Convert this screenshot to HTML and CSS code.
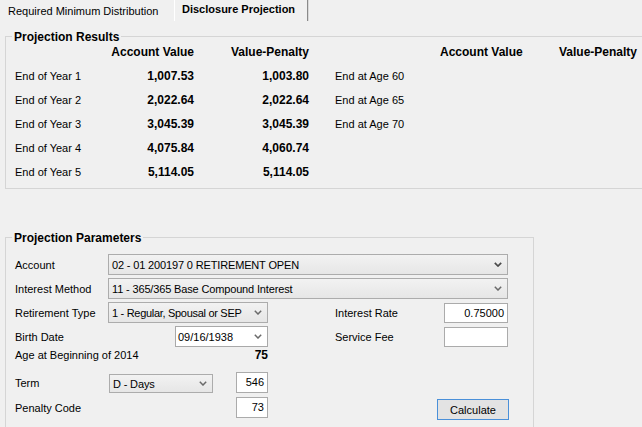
FILE: index.html
```html
<!DOCTYPE html>
<html>
<head>
<meta charset="utf-8">
<link rel="stylesheet" href="styles.css">
</head>
<body>
<div class="tabs">
  <div class="tab">Required Minimum Distribution</div>
  <div class="tab active">Disclosure Projection</div>
</div>
<div class="page">
  <section class="group results">
    <h2 class="group-title">Projection Results</h2>
    <div class="results-grid">
      <span></span><b class="num">Account Value</b><b class="num">Value-Penalty</b><span></span><b class="num">Account Value</b><b class="num">Value-Penalty</b>
      <span>End of Year 1</span><b class="num">1,007.53</b><b class="num">1,003.80</b><span class="age">End at Age 60</span><b class="num"></b><b class="num"></b>
      <span>End of Year 2</span><b class="num">2,022.64</b><b class="num">2,022.64</b><span class="age">End at Age 65</span><b class="num"></b><b class="num"></b>
      <span>End of Year 3</span><b class="num">3,045.39</b><b class="num">3,045.39</b><span class="age">End at Age 70</span><b class="num"></b><b class="num"></b>
      <span>End of Year 4</span><b class="num">4,075.84</b><b class="num">4,060.74</b><span></span><b class="num"></b><b class="num"></b>
      <span>End of Year 5</span><b class="num">5,114.05</b><b class="num">5,114.05</b><span></span><b class="num"></b><b class="num"></b>
    </div>
  </section>

  <section class="group params">
    <h2 class="group-title">Projection Parameters</h2>
    <div class="form">
      <div class="row">
        <span class="lbl w93">Account</span>
        <div class="select w400"><span>02 - 01 200197 0 RETIREMENT OPEN</span><svg class="chev dark" width="8" height="5" viewBox="0 0 8 5"><polyline points="0.8,0.8 4,4 7.2,0.8" fill="none" stroke="currentColor" stroke-width="1.7"/></svg></div>
      </div>
      <div class="row">
        <span class="lbl w93">Interest Method</span>
        <div class="select w400"><span>11 - 365/365 Base Compound Interest</span><svg class="chev" width="8" height="5" viewBox="0 0 8 5"><polyline points="0.8,0.8 4,4 7.2,0.8" fill="none" stroke="currentColor" stroke-width="1.5"/></svg></div>
      </div>
      <div class="row">
        <span class="lbl w93">Retirement Type</span>
        <div class="select narrow w160"><span>1 - Regular, Spousal or SEP</span><svg class="chev" width="8" height="5" viewBox="0 0 8 5"><polyline points="0.8,0.8 4,4 7.2,0.8" fill="none" stroke="currentColor" stroke-width="1.5"/></svg></div>
        <span class="lbl w109 ml67">Interest Rate</span>
        <div class="input w64">0.75000</div>
      </div>
      <div class="row">
        <span class="lbl w160">Birth Date</span>
        <div class="select date w93"><span>09/16/1938</span><svg class="chev" width="8" height="5" viewBox="0 0 8 5"><polyline points="0.8,0.8 4,4 7.2,0.8" fill="none" stroke="currentColor" stroke-width="1.5"/></svg></div>
        <span class="lbl w109 ml67">Service Fee</span>
        <div class="input w64"></div>
      </div>
      <div class="row age-row">
        <span class="lbl">Age at Beginning of 2014</span>
        <b class="age-val">75</b>
      </div>
      <div class="row tall">
        <span class="lbl w94">Term</span>
        <div class="select term w104"><span>D - Days</span><svg class="chev" width="8" height="5" viewBox="0 0 8 5"><polyline points="0.8,0.8 4,4 7.2,0.8" fill="none" stroke="currentColor" stroke-width="1.5"/></svg></div>
        <div class="input w32 ml23">546</div>
      </div>
      <div class="row tall">
        <span class="lbl w221">Penalty Code</span>
        <div class="input w32">73</div>
        <button class="btn">Calculate</button>
      </div>
    </div>
  </section>
</div>
</body>
</html>
```
FILE: styles.css
```css
html, body {
  margin: 0;
  padding: 0;
  background: #f0f0f0;
  overflow: hidden;
}
body {
  width: 642px;
  height: 427px;
  font-family: "Liberation Sans", Arial, sans-serif;
  font-size: 11px;
  color: #000;
}
.tabs {
  display: flex;
  align-items: flex-end;
  height: 21px;
  padding-left: 2px;
}
.tab {
  height: 19px;
  line-height: 18px;
  padding: 0 14px 0 6px;
  width: 152px;
  box-sizing: content-box;
}
.tab.active {
  height: 21px;
  line-height: 19px;
  font-weight: bold;
  width: auto;
  padding: 0 12px 0 7px;
  border-left: 1px solid #ffffff;
  border-right: 1px solid #8a8a8a;
  box-shadow: 1px 0 0 #d8d8d8;
}
.page {
  padding-top: 15px;
}
.group {
  border: 1px solid #d5d5d5;
  margin-left: 5px;
  box-sizing: border-box;
}
.group-title {
  display: block;
  width: fit-content;
  margin: -7px 0 0 6px;
  padding: 0 2px;
  height: 14px;
  line-height: 14px;
  font-size: 12px;
  font-weight: bold;
  background: #f0f0f0;
}
.results {
  width: 660px;
  padding-bottom: 4px;
}
.results-grid {
  margin-top: -4px;
  padding-left: 9px;
  display: grid;
  grid-template-columns: 96px 83px 115px 131px 81px 116px;
  grid-auto-rows: 24px;
  align-items: center;
}
.num {
  text-align: right;
  font-size: 12px;
  font-weight: bold;
  white-space: nowrap;
}
.age {
  padding-left: 26px;
}
.params {
  margin-top: 48px;
  width: 529px;
  height: 240px;
}
.form {
  padding: 9px 0 0 9px;
  display: flex;
  flex-direction: column;
  gap: 3px;
}
.row {
  display: flex;
  align-items: center;
  height: 21px;
}
.row.tall {
  height: 22px;
}
.age-row {
  margin-top: -3px;
  margin-bottom: 6px;
  height: 16px;
  width: 253px;
  justify-content: space-between;
}
.age-val {
  font-size: 12px;
}
.lbl {
  flex: none;
}
.w93 { width: 93px; }
.w94 { width: 94px; }
.w109 { width: 109px; }
.w160 { width: 160px; }
.w221 { width: 221px; }
.w400 { width: 400px; }
.w104 { width: 104px; }
.w64 { width: 64px; }
.w32 { width: 32px; }
.ml67 { margin-left: 67px; }
.ml23 { margin-left: 23px; }
.select {
  flex: none;
  box-sizing: border-box;
  height: 21px;
  border: 1px solid #acacac;
  background: linear-gradient(#f2f2f2, #e6e6e6);
  display: flex;
  align-items: center;
  justify-content: space-between;
  padding: 0 5px 0 3px;
  white-space: nowrap;
  letter-spacing: -0.15px;
}
.select.narrow {
  letter-spacing: -0.3px;
}
.select.date {
  background: #ffffff;
  border-color: #a9a9a9;
  padding-left: 2px;
  letter-spacing: 0;
}
.select.term {
  height: 19px;
  align-self: flex-end;
  margin-bottom: 1px;
}
.chev {
  color: #6a6a6a;
  flex: none;
}
.chev.dark {
  color: #4a4a4a;
}
.input {
  flex: none;
  box-sizing: border-box;
  height: 20px;
  background: #ffffff;
  border: 1px solid #ababab;
  text-align: right;
  padding-right: 3px;
  line-height: 18px;
}
.row.tall .input {
  height: 21px;
  line-height: 19px;
  align-self: flex-start;
}
.btn {
  flex: none;
  margin-left: 169px;
  width: 72px;
  height: 21px;
  align-self: flex-end;
  margin-bottom: -1px;
  border: 1px solid #4a90d9;
  background: #e3e3e3;
  font-family: "Liberation Sans", Arial, sans-serif;
  font-size: 11px;
  color: #000;
  padding: 0;
}
```
